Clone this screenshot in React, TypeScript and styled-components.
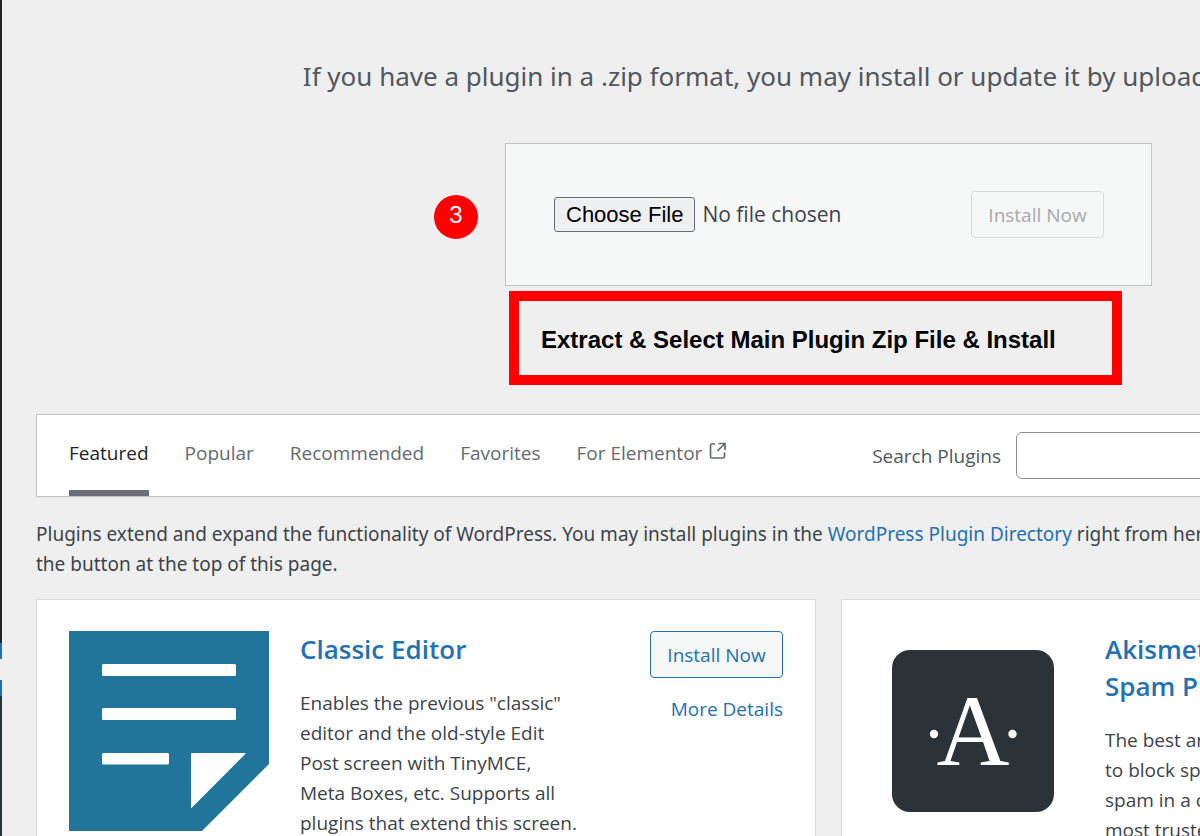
import React from "react";
import styled, { createGlobalStyle } from "styled-components";

const GlobalStyle = createGlobalStyle`
  * { box-sizing: border-box; }
  body {
    margin: 0;
    background: #efefef;
    color: #3c434a;
    font-family: "Open Sans", "Noto Sans", sans-serif;
    font-size: 19px;
    line-height: 30px;
  }
  p, h1, h2, h3, ul { margin: 0; padding: 0; }
`;

const Page = styled.div`
  display: flex;
  height: 100vh;
  overflow: hidden;
`;

const SideRail = styled.aside`
  flex: 0 0 2px;
  display: flex;
  flex-direction: column;
  background: #2c3338;
`;

const RailTop = styled.div`
  height: 643px;
  background: #1d2327;
`;

const RailCurrent = styled.div`
  height: 53px;
  padding: 16px 0;
  background: #2271b1;
`;

const RailNotch = styled.div`
  height: 21px;
  background: #efefef;
`;

const Main = styled.main`
  flex: none;
  width: calc(130vw + 25px);
  margin-left: 34px;
`;

const UploadHelp = styled.p`
  padding: 56px 16px 0 0;
  color: #50575e;
  font-family: "Noto Sans", sans-serif;
  font-size: 26px;
  line-height: 40px;
  text-align: center;
`;

const UploadArea = styled.section`
  position: relative;
  width: 647px;
  margin: 47px auto 0;
`;

const UploadForm = styled.form`
  display: flex;
  align-items: center;
  justify-content: space-between;
  padding: 47px 47px 47px 48px;
  border: 1px solid #c3c4c7;
  background: #f6f7f7;
`;

const FileInput = styled.input`
  width: 400px;
  color: #3c434a;
  font: 21px/32px "Open Sans", "Noto Sans", sans-serif;

  &::file-selector-button {
    height: 35px;
    margin: 0 7px 0 0;
    padding: 0 11px;
    border: 1px solid #6b6b76;
    border-radius: 3px;
    background: #efefef;
    color: #000;
    font: 22px/30px "Liberation Sans", Arial, sans-serif;
  }
`;

const Button = styled.button`
  height: 47px;
  width: 133px;
  padding: 0;
  border: 1px solid #2271b1;
  border-radius: 4px;
  background: #f6f7f7;
  color: #2271b1;
  font: inherit;
  white-space: nowrap;

  &:disabled {
    border-color: #dcdcde;
    color: #a7aaad;
  }
`;

const StepBadge = styled.span`
  position: absolute;
  top: 52px;
  left: -71px;
  width: 44px;
  height: 44px;
  border-radius: 50%;
  background: #f00;
  color: #fff;
  font: 24px/40px "Liberation Sans", Arial, sans-serif;
  text-align: center;
`;

const Callout = styled.p`
  margin: 5px 30px 0 4px;
  padding: 24px 22px 20px;
  border: 10px solid #f00;
  color: #000;
  font: bold 24px/30px "Liberation Sans", Arial, sans-serif;
  white-space: nowrap;
`;

const FilterBar = styled.nav`
  display: flex;
  height: 83px;
  margin-top: 29px;
  padding: 0 32px;
  border: 1px solid #c3c4c7;
  background: #fff;
  box-shadow: 0 1px 1px rgba(0, 0, 0, 0.04);
`;

const Tabs = styled.ul`
  display: flex;
  gap: 36px;
  list-style: none;
`;

const Tab = styled.a<{ $current?: boolean }>`
  display: flex;
  gap: 7px;
  height: 81px;
  padding-top: 23px;
  border-bottom: 6px solid ${(p) => (p.$current ? "#6b6e76" : "transparent")};
  color: ${(p) => (p.$current ? "#1d2327" : "#646970")};
  text-decoration: none;
  white-space: nowrap;

  svg { margin-top: 4px; }
`;

const SearchForm = styled.form`
  display: flex;
  align-items: center;
  gap: 15px;
  margin-left: auto;
  color: #50575e;
`;

const SearchInput = styled.input`
  width: 572px;
  height: 47px;
  padding: 0 12px;
  border: 1px solid #8c8f94;
  border-radius: 6px;
  font: inherit;
`;

const Intro = styled.p`
  margin-top: 22px;
  font-family: "Noto Sans", sans-serif;
`;

const Link = styled.a`
  color: #2271b1;
  text-decoration: none;
`;

const Cards = styled.div`
  display: grid;
  grid-template-columns: 65vw 65vw;
  gap: 25px;
  margin-top: 20px;
`;

const Card = styled.article`
  display: flex;
  padding: 31px 32px;
  border: 1px solid #dcdcde;
  background: #fff;

  > svg { flex: none; }
`;

const CardText = styled.div`
  flex: 0 1 280px;
  margin-left: 31px;
`;

const CardTitle = styled.h3`
  font-size: 26px;
  font-weight: 600;
  line-height: 37px;
`;

const CardDescription = styled.p`
  margin-top: 20px;
`;

const CardActions = styled.div`
  display: flex;
  flex-direction: column;
  align-items: flex-end;
  gap: 16px;
  margin-left: auto;
  white-space: nowrap;
`;

const ExternalIcon = () => (
  <svg width="18" height="18" viewBox="0 0 18 18" fill="none" stroke="currentColor" strokeWidth="1.7" aria-hidden="true">
    <path d="M6 2H3Q1.500 2 1.500 3.500V14.500Q1.500 16 3 16H14Q15.500 16 15.500 14.500V10.500" />
    <path d="M9.500 1.500H16V8M16 1.500L8.500 9" />
  </svg>
);

const ClassicEditorIcon = () => (
  <svg width="200" height="200" viewBox="0 0 200 200" aria-hidden="true">
    <path fill="#21759b" d="M0 0H200V133L133 200H0Z" />
    <g fill="#fff">
      <rect x="33" y="33" width="134" height="12" rx="1.500" />
      <rect x="33" y="77" width="134" height="12" rx="1.500" />
      <rect x="33" y="122" width="67" height="11.500" rx="1.500" />
      <path d="M122 122.500Q122 122 122.500 122H176Q177 122 176.300 123L123 176.500Q122 177.500 122 176.500Z" />
    </g>
  </svg>
);

const AkismetIcon = () => (
  <svg width="200" height="200" viewBox="0 0 200 200" aria-hidden="true">
    <rect x="18" y="19" width="162" height="162" rx="18" fill="#2c3338" />
    <g fill="#fff">
      <circle cx="60" cy="103" r="4.200" />
      <circle cx="138.500" cy="103" r="4.200" />
      <text x="99" y="134" textAnchor="middle" fontFamily="Liberation Serif, Times New Roman, serif" fontSize="101">
        A
      </text>
    </g>
  </svg>
);

const tabs = ["Featured", "Popular", "Recommended", "Favorites", "For Elementor"];

const plugins = [
  {
    name: "Classic Editor",
    icon: <ClassicEditorIcon />,
    text: 'Enables the previous "classic" editor and the old-style Edit Post screen with TinyMCE, Meta Boxes, etc. Supports all plugins that extend this screen.',
  },
  {
    name: "Akismet Anti-spam: Spam Protection",
    icon: <AkismetIcon />,
    text: "The best anti-spam protection to block spam comments and spam in a contact form. The most trusted antispam solution.",
  },
];

export default function App() {
  return (
    <>
      <GlobalStyle />
      <Page>
        <SideRail>
          <RailTop />
          <RailCurrent>
            <RailNotch />
          </RailCurrent>
        </SideRail>
        <Main>
          <UploadHelp>
            If you have a plugin in a .zip format, you may install or update it by uploading it here.
          </UploadHelp>
          <UploadArea>
            <StepBadge>3</StepBadge>
            <UploadForm>
              <FileInput type="file" aria-label="Plugin zip file" />
              <Button type="submit" disabled>Install Now</Button>
            </UploadForm>
            <Callout>Extract &amp; Select Main Plugin Zip File &amp; Install</Callout>
          </UploadArea>
          <FilterBar>
            <Tabs>
              {tabs.map((name, i) => (
                <li key={name}>
                  <Tab href="#" $current={i === 0}>
                    {name}
                    {name === "For Elementor" && <ExternalIcon />}
                  </Tab>
                </li>
              ))}
            </Tabs>
            <SearchForm>
              <label htmlFor="search-plugins">Search Plugins</label>
              <SearchInput id="search-plugins" type="search" />
            </SearchForm>
          </FilterBar>
          <Intro>
            Plugins extend and expand the functionality of WordPress. You may install plugins in the{" "}
            <Link href="#">WordPress Plugin Directory</Link> right from here, or upload a plugin in .zip format by clicking
            the button at the top of this page.
          </Intro>
          <Cards>
            {plugins.map((plugin) => (
              <Card key={plugin.name}>
                {plugin.icon}
                <CardText>
                  <CardTitle>
                    <Link href="#">{plugin.name}</Link>
                  </CardTitle>
                  <CardDescription>{plugin.text}</CardDescription>
                </CardText>
                <CardActions>
                  <Button type="button">Install Now</Button>
                  <Link href="#">More Details</Link>
                </CardActions>
              </Card>
            ))}
          </Cards>
        </Main>
      </Page>
    </>
  );
}
